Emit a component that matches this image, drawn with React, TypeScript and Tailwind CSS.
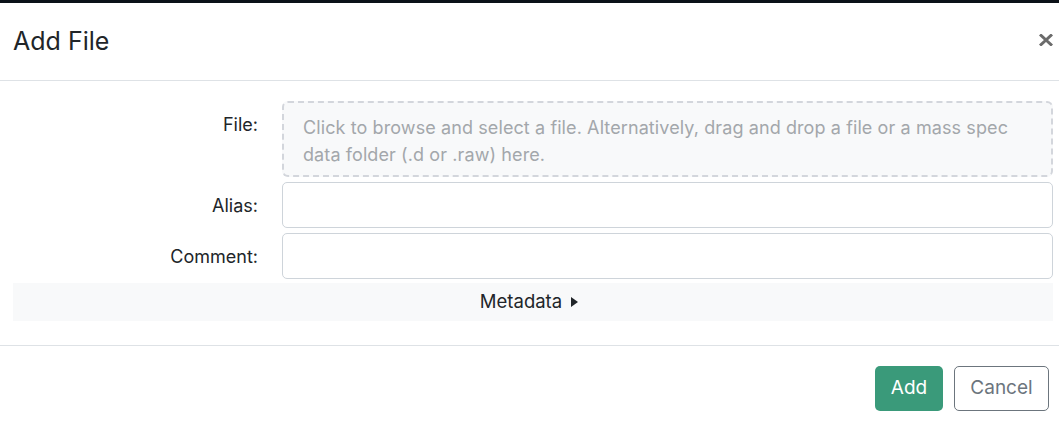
import React from 'react';

export default function App() {
  return (
    <div className="w-[1059px] h-[427px] bg-white border-t-[3px] border-[#0b1118] font-['Inter',sans-serif] text-[#212529]">
      <div className="flex items-center justify-between h-[78px] pl-[13px] pr-[6px] border-b border-[#dee2e6]">
        <h1 className="text-[25px] font-normal">Add File</h1>
        <button className="text-[#6b6b6b] flex items-center justify-center -mt-[4px]">
          <svg viewBox="0 0 14 12" className="w-[14px] h-[12px]">
            <path d="M1 0.5 L13 11.5 M13 0.5 L1 11.5" stroke="currentColor" strokeWidth="3" />
          </svg>
        </button>
      </div>

      <div className="pl-[13px] pr-[6px] pt-[20px] pb-[24px] flex flex-col gap-[5px] border-b border-[#dee2e6]">
        <div className="flex items-start">
          <div className="w-[245px] shrink-0 text-right text-[18px] pt-[10px]">File:</div>
          <div className="ml-[24px] flex-1 h-[76px] rounded-[6px] border-2 border-dashed border-[#d3d6dc] bg-[#f8f9fa] pl-[19px] pr-[20px] pt-[11px] text-[18px] tracking-[0.1px] leading-[27px] text-[#a3a7ab]">
            Click to browse and select a file. Alternatively, drag and drop a file or a mass spec data folder (.d or .raw) here.
          </div>
        </div>
        <div className="flex items-center">
          <div className="w-[245px] shrink-0 text-right text-[18px]">Alias:</div>
          <input className="ml-[24px] flex-1 h-[46px] rounded-[5px] border border-[#ced4da] bg-white" />
        </div>
        <div className="flex items-center">
          <div className="w-[245px] shrink-0 text-right text-[18px]">Comment:</div>
          <input className="ml-[24px] flex-1 h-[46px] rounded-[5px] border border-[#ced4da] bg-white" />
        </div>
        <div className="h-[38px] bg-[#f8f9fa] flex items-center justify-center pr-[8px] text-[18.5px] -mt-[1px]">
          <span>Metadata</span>
          <svg viewBox="0 0 7 10" className="ml-[9px] w-[7px] h-[10px]">
            <path d="M0 0 L7 5 L0 10 Z" fill="#212529" />
          </svg>
        </div>
      </div>

      <div className="flex justify-end gap-[11px] pr-[10px] pt-[20px]">
        <button className="h-[45px] w-[68px] rounded-[5px] bg-[#3a9a7a] text-white text-[19px]">Add</button>
        <button className="h-[45px] w-[95px] rounded-[5px] border border-[#6c757d] text-[#6c757d] text-[19px]">Cancel</button>
      </div>
    </div>
  );
}
